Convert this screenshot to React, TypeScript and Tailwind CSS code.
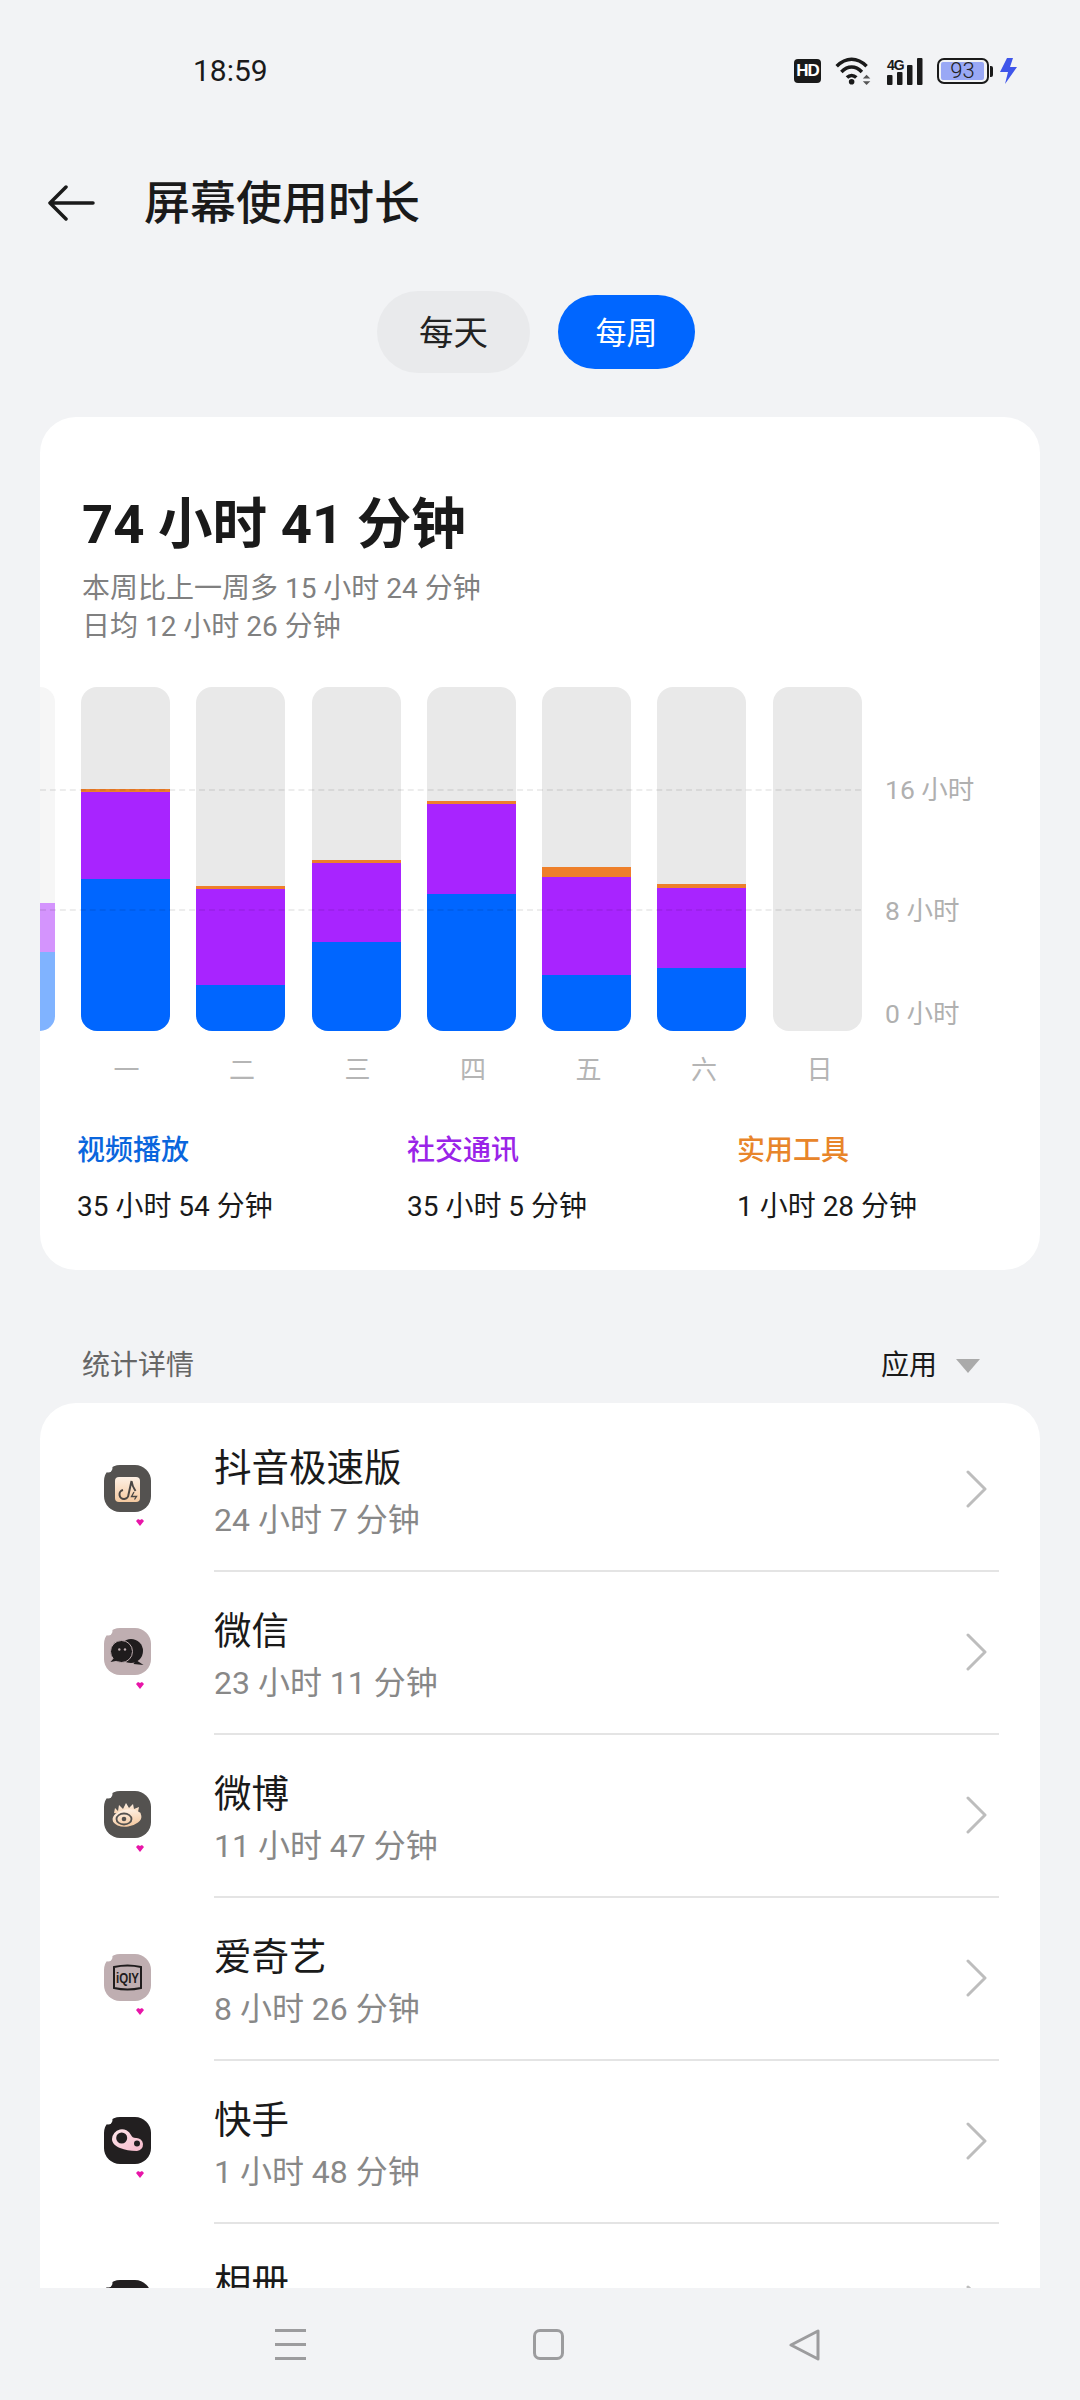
import React from 'react';

const bars = [
  { day: '一', orange: 3, purple: 87, blue: 152 },
  { day: '二', orange: 3, purple: 96, blue: 46 },
  { day: '三', orange: 3, purple: 79, blue: 89 },
  { day: '四', orange: 3, purple: 90, blue: 137 },
  { day: '五', orange: 10, purple: 98, blue: 56 },
  { day: '六', orange: 4, purple: 80, blue: 63 },
  { day: '日', orange: 0, purple: 0, blue: 0 },
];

const apps = [
  { name: '抖音极速版', time: '24 小时 7 分钟', icon: 'douyin' },
  { name: '微信', time: '23 小时 11 分钟', icon: 'wechat' },
  { name: '微博', time: '11 小时 47 分钟', icon: 'weibo' },
  { name: '爱奇艺', time: '8 小时 26 分钟', icon: 'iqiyi' },
  { name: '快手', time: '1 小时 48 分钟', icon: 'kuaishou' },
  { name: '相册', time: '', icon: 'album' },
];

const tileColor: Record<string, string> = {
  douyin: '#545250',
  wechat: '#bfaeb1',
  weibo: '#545250',
  iqiyi: '#bfaeb1',
  kuaishou: '#221f20',
  album: '#221f20',
};

const AppIcon = ({ kind }: { kind: string }) => (
  <svg width="47" height="47" viewBox="0 0 47 47">
    <defs>
      <linearGradient id="peach" x1="0" y1="0" x2="0" y2="1">
        <stop offset="0" stopColor="#fdf0e4" />
        <stop offset="1" stopColor="#f5c9a0" />
      </linearGradient>
      <linearGradient id="blush" x1="0" y1="0" x2="1" y2="1">
        <stop offset="0" stopColor="#fde6ea" />
        <stop offset="1" stopColor="#f7b9cb" />
      </linearGradient>
    </defs>
    <rect x="0" y="0" width="47" height="47" rx="16" fill={tileColor[kind]} />
    <circle cx="4" cy="3" r="4.500" fill="#fff" />
    {kind === 'douyin' && (
      <>
        <rect x="11" y="12" width="25" height="25" rx="4" fill="url(#peach)" />
        <path d="M19 25a4.500 4.500 0 1 0 5.500 4.500L27.500 16c.5 4 2 7 4 10" fill="none" stroke="#4a4644" strokeWidth="2" />
        <path d="M30 27l-2.500 4.500h5l-2 3" fill="none" stroke="#4a4644" strokeWidth="1.300" />
      </>
    )}
    {kind === 'wechat' && (
      <>
        <circle cx="27" cy="23" r="12" fill="#1f1c1d" />
        <path d="M32 32l7.500 5-10-1z" fill="#1f1c1d" />
        <circle cx="17.500" cy="23.500" r="11" fill="#1f1c1d" stroke="#bfaeb1" strokeWidth="1" />
        <path d="M10 30l-3.500 4 8-1.500z" fill="#1f1c1d" />
        <circle cx="15.300" cy="21.500" r="1.200" fill="#bfaeb1" />
        <circle cx="21" cy="21.500" r="1.200" fill="#bfaeb1" />
      </>
    )}
    {kind === 'weibo' && (
      <>
        <path d="M10 22l1-5 3 3 1-6 4 4 3-6 3 5 4-4 1 5 5-2-1 5 3 1-4 4z" fill="url(#peach)" />
        <ellipse cx="23" cy="27" rx="14.500" ry="8.500" transform="rotate(-8 23 27)" fill="url(#peach)" />
        <ellipse cx="20" cy="28" rx="7.500" ry="5.500" fill="none" stroke="#545250" strokeWidth="1.800" />
        <circle cx="20" cy="28" r="2.300" fill="#545250" />
      </>
    )}
    {kind === 'iqiyi' && (
      <>
        <path d="M10 13q13.500-3 27 0v21q-13.500 3-27 0z" fill="none" stroke="#1f1c1d" strokeWidth="2" />
        <text x="12" y="29" textLength="23" lengthAdjust="spacingAndGlyphs" fontSize="15" fontWeight="700" fill="#1f1c1d" className="font-['Liberation_Sans']">iQIY</text>
      </>
    )}
    {kind === 'kuaishou' && (
      <>
        <path d="M8 22a10 10 0 0 1 19-4c1 2 2 3 5 3a6.500 6.500 0 0 1 1 13c-7 0-12-1-17-3-5-2-8-5-8-9z" fill="url(#blush)" />
        <circle cx="17.700" cy="21" r="5.500" fill="#221f20" />
        <circle cx="33" cy="26.500" r="3" fill="#221f20" />
      </>
    )}
  </svg>
);

const Chevron = () => (
  <svg width="22" height="38" viewBox="0 0 22 38" fill="none" stroke="#bdbdbd" strokeWidth="3" strokeLinecap="round" strokeLinejoin="round">
    <path d="M2 2l17 17L2 36" />
  </svg>
);

export default function App() {
  return (
    <div className="w-[1080px] h-[2400px] flex flex-col overflow-hidden bg-[#f2f3f5] text-[#1a1a1a] font-['Roboto','Noto_Sans_CJK_SC',sans-serif]">
      <div className="h-[2288px] shrink-0 overflow-hidden">
        {/* status bar */}
        <div className="h-[140px] pt-[2px] flex items-center justify-between pl-[193px] pr-[63px]">
          <span className="text-[30px] leading-none">18:59</span>
          <div className="flex items-center">
            <span className="w-[27px] h-[24px] rounded-[4px] bg-[#1a1a1a] text-white text-[17px] font-bold leading-[24px] text-center font-['Liberation_Sans'] tracking-[-1px]">HD</span>
            <svg width="37" height="28" viewBox="0 0 38 30" className="ml-[14px]" fill="none" stroke="#1a1a1a" strokeWidth="3.800">
              <path d="M1 10c10-10 22-10 32 0M6 16c7-7 15-7 22 0M12 22c3-3 7-3 10 0" />
              <circle cx="17" cy="26.500" r="3" fill="#1a1a1a" stroke="none" />
              <path d="M29 23l4-4 4 4zM29 26l4 4 4-4z" fill="#555" stroke="none" />
            </svg>
            <div className="relative ml-[15px] w-[36px] h-[27px]">
              <span className="absolute left-0 top-0 text-[14px] font-bold leading-none tracking-[-1px] font-['Liberation_Sans']">4G</span>
              <svg width="36" height="27" viewBox="0 0 36 27" fill="#1a1a1a">
                <rect x="0" y="17" width="5.500" height="10" rx="1" />
                <rect x="10" y="14" width="5.500" height="13" rx="1" />
                <rect x="20" y="7" width="5.500" height="20" rx="1" />
                <rect x="30" y="0" width="5.500" height="27" rx="1" />
              </svg>
            </div>
            <div className="ml-[14px] w-[52px] h-[26px] rounded-[7px] border-2 border-[#1a1a1a] p-[2px] flex">
              <div className="w-[43px] h-full rounded-[2px] bg-[#99a8f5] text-[22px] leading-[18px] font-light text-center text-[#222]">93</div>
            </div>
            <div className="ml-[1px] w-[3px] h-[11px] bg-[#1a1a1a] rounded-r-[2px]" />
            <svg width="17" height="26" viewBox="0 0 17 26" className="ml-[7px]" fill="#3f55ea">
              <path d="M7 0h6l-3 9h7L5 26l3-12H0z" />
            </svg>
          </div>
        </div>

        {/* header */}
        <div className="h-[122px] pt-[4px] flex items-center pl-[48px]">
          <svg width="47" height="36" viewBox="0 0 47 36" fill="none" stroke="#1a1a1a" strokeWidth="3.500" strokeLinecap="round" strokeLinejoin="round">
            <path d="M45 18H3M18 2L2 18l16 16" />
          </svg>
          <h1 className="ml-[49px] text-[46px] leading-none font-medium">屏幕使用时长</h1>
        </div>

        {/* daily / weekly toggle */}
        <div className="h-[140px] pr-[8px] flex items-center justify-center gap-[28px]">
          <button className="w-[153px] h-[82px] pt-[4px] rounded-full bg-[#e9eaec] text-[34.500px] text-[#222]">每天</button>
          <button className="w-[137px] h-[74px] pt-[4px] rounded-full bg-[#0066ff] text-[31px] text-white">每周</button>
        </div>

        {/* weekly summary */}
        <div className="mx-[40px] mt-[15px] h-[853px] rounded-[36px] bg-white overflow-hidden">
          <div className="pl-[42px] pt-[73px]">
            <div className="text-[54.500px] leading-[68px] font-bold">74 小时 41 分钟</div>
            <div className="mt-[12px] text-[28px] leading-[38px] text-[#808080]">
              <div>本周比上一周多 15 小时 24 分钟</div>
              <div>日均 12 小时 26 分钟</div>
            </div>
          </div>

          <div className="relative mt-[41px] h-[344px] flex">
            <div className="w-[15px] h-full rounded-r-[16px] overflow-hidden flex flex-col bg-[#f6f6f6]">
              <div className="flex-1" />
              <div className="h-[49px] bg-[#d494fd]" />
              <div className="h-[79px] bg-[#80b3ff]" />
            </div>
            <div className="ml-[26px] flex gap-[26.300px]">
              {bars.map((b) => (
                <div key={b.day} className="w-[89px] h-full rounded-[16px] overflow-hidden flex flex-col bg-[#e9e9e9]">
                  <div className="flex-1" />
                  <div className="bg-[#ee7f2a]" style={{ height: b.orange }} />
                  <div className="bg-[#a824ff]" style={{ height: b.purple }} />
                  <div className="bg-[#0066ff]" style={{ height: b.blue }} />
                </div>
              ))}
            </div>
            <div className="absolute left-0 top-[102px] w-[821px] border-t-2 border-dashed border-[#00000012]" />
            <div className="absolute left-0 top-[222px] w-[821px] border-t-2 border-dashed border-[#00000012]" />
            <span className="absolute left-[845px] top-[85px] text-[26.500px] leading-[36px] text-[#b0b0b0]">16 小时</span>
            <span className="absolute left-[845px] top-[206px] text-[26.500px] leading-[36px] text-[#b0b0b0]">8 小时</span>
            <span className="absolute left-[845px] top-[309px] text-[26.500px] leading-[36px] text-[#b0b0b0]">0 小时</span>
          </div>

          <div className="ml-[42px] mt-[21px] flex gap-[26.500px]">
            {bars.map((b) => (
              <div key={b.day} className="w-[89px] text-center text-[26px] leading-[36px] text-[#b5b5b5]">{b.day}</div>
            ))}
          </div>

          <div className="mt-[43px] pl-[37px] grid grid-cols-[330px_330px_1fr]">
            <div>
              <div className="text-[28px] leading-[40px] font-medium text-[#0a66dd]">视频播放</div>
              <div className="mt-[16px] text-[28px] leading-[40px]">35 小时 54 分钟</div>
            </div>
            <div>
              <div className="text-[28px] leading-[40px] font-medium text-[#9a24e8]">社交通讯</div>
              <div className="mt-[16px] text-[28px] leading-[40px]">35 小时 5 分钟</div>
            </div>
            <div>
              <div className="text-[28px] leading-[40px] font-medium text-[#e8852a]">实用工具</div>
              <div className="mt-[16px] text-[28px] leading-[40px]">1 小时 28 分钟</div>
            </div>
          </div>
        </div>

        {/* stats header */}
        <div className="h-[133px] flex items-end justify-between pl-[82px] pr-[100px] pb-[17px]">
          <span className="text-[28px] leading-[40px] text-[#666]">统计详情</span>
          <div className="flex items-center">
            <span className="text-[28px] leading-[40px]">应用</span>
            <span className="ml-[19px] w-0 h-0 border-x-[12px] border-x-transparent border-t-[14px] border-t-[#aaaaaa]" />
          </div>
        </div>

        {/* app list */}
        <div className="mx-[40px] rounded-t-[36px] bg-white pt-[6px]">
          {apps.map((a) => (
            <div key={a.name} className="h-[163px] flex">
              <div className="w-[174px] shrink-0 pl-[64px] pt-[56px] relative">
                <AppIcon kind={a.icon} />
                <svg width="8" height="7" viewBox="0 0 8 7" className="absolute left-[96px] top-[110px]" fill="#e815a8">
                  <path d="M0 2l2-2 2 1 2-1 2 2-4 5z" />
                </svg>
              </div>
              <div className="flex-1 mr-[41px] border-b-2 border-[#e4e4e4] flex items-start justify-between">
                <div className="pt-[34px]">
                  <div className="text-[37.500px] leading-[50px]">{a.name}</div>
                  <div className="mt-[5px] text-[32px] leading-[44px] text-[#888888]">{a.time}</div>
                </div>
                <div className="pt-[61px] pr-[11px]"><Chevron /></div>
              </div>
            </div>
          ))}
        </div>
      </div>

      {/* nav bar */}
      <div className="flex-1 relative">
        <div className="absolute left-[275px] top-[41px] w-[31px] h-[31px] flex flex-col justify-between">
          <div className="h-[3px] bg-[#9c9c9e]" />
          <div className="h-[3px] bg-[#9c9c9e]" />
          <div className="h-[3px] bg-[#9c9c9e]" />
        </div>
        <div className="absolute left-[533px] top-[41px] w-[31px] h-[31px] rounded-[7px] border-[3px] border-[#9c9c9e]" />
        <svg width="31" height="32" viewBox="0 0 31 32" className="absolute left-[789px] top-[41px]" fill="none" stroke="#9c9c9e" strokeWidth="3" strokeLinejoin="round">
          <path d="M29 2v28L2 16z" />
        </svg>
      </div>
    </div>
  );
}
